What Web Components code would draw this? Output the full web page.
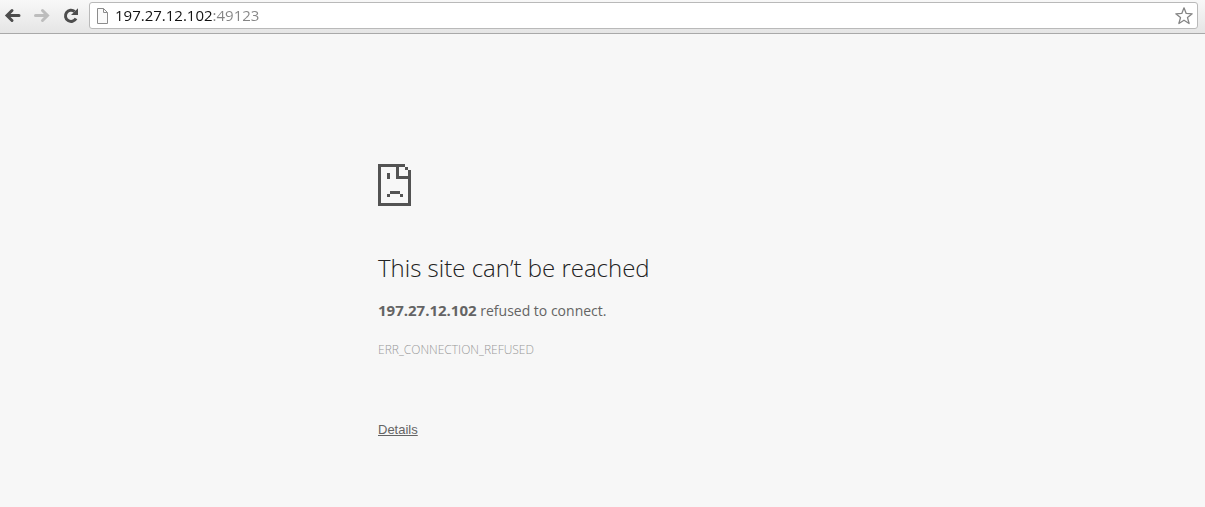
<!DOCTYPE html>
<html lang="en">
<head>
<meta charset="utf-8">
<title>197.27.12.102</title>
<style>
body { margin: 0; background: #f7f7f7; font-family: "Open Sans", "Noto Sans", sans-serif; }
</style>
</head>
<body>
<browser-window>
  <browser-toolbar slot="toolbar" address="197.27.12.102:49123"></browser-toolbar>
  <error-page>
    <span slot="title">This site can’t be reached</span>
    <strong slot="host">197.27.12.102</strong>
    <span slot="reason">refused to connect.</span>
    <span slot="code">ERR_CONNECTION_REFUSED</span>
  </error-page>
</browser-window>
<script>
class BrowserWindow extends HTMLElement {
  constructor() {
    super();
    this.attachShadow({ mode: "open" }).innerHTML = `
      <style>
        :host { display: flex; flex-direction: column; min-height: 100vh; }
      </style>
      <slot name="toolbar"></slot>
      <slot></slot>`;
  }
}

class ToolbarButton extends HTMLElement {
  connectedCallback() {
    if (this.shadowRoot) return;
    this.attachShadow({ mode: "open" }).innerHTML = `
      <style>
        :host { display: block; }
        button { display: block; width: 18px; height: 18px; padding: 0; border: 0; background: none; color: #4d4d4d; }
        button:disabled { color: #bdbdbd; }
      </style>
      <button type="button"><slot></slot></button>`;
    const button = this.shadowRoot.querySelector("button");
    button.setAttribute("aria-label", this.getAttribute("label"));
    button.disabled = this.hasAttribute("disabled");
  }
}

class BrowserToolbar extends HTMLElement {
  connectedCallback() {
    if (this.shadowRoot) return;
    this.attachShadow({ mode: "open" }).innerHTML = `
      <style>
        :host {
          display: flex; align-items: center; box-sizing: border-box; height: 34px;
          padding: 0 7px 2px 4px; border-bottom: 1px solid #a9a9a9;
          background: linear-gradient(#f8f8f8, #e5e5e5);
        }
        nav { display: flex; gap: 11px; margin-right: 9px; }
        svg { display: block; }
        .omnibox {
          flex: 1; display: flex; align-items: center; box-sizing: border-box; height: 27px;
          padding: 0 4px 0 6px; border: 1px solid #b9b9b9; border-radius: 3px; background: #fff;
        }
        input {
          flex: 1; min-width: 0; height: 22px; margin-left: 6px; padding: 0 0 2px; border: 0; outline: 0;
          font: 15px/22px "Open Sans", "Noto Sans", sans-serif; color: transparent;
          background: linear-gradient(to right, #111 98px, #858585 98px);
          -webkit-background-clip: text; background-clip: text;
        }
      </style>
      <nav aria-label="History">
        <toolbar-button label="Back">
          <svg width="18" height="18" viewBox="0 0 18 18" fill="none" stroke="currentColor" stroke-width="3" stroke-linecap="round"><path d="M15 8.500H4M8 3.500l-5 5 5 5"/></svg>
        </toolbar-button>
        <toolbar-button label="Forward" disabled>
          <svg width="18" height="18" viewBox="0 0 18 18" fill="none" stroke="currentColor" stroke-width="3" stroke-linecap="round"><path d="M2.500 8.500H13M9.500 3.500l5 5-5 5"/></svg>
        </toolbar-button>
        <toolbar-button label="Reload">
          <svg width="18" height="18" viewBox="0 0 18 18"><path d="M14 11.500A5.600 5.600 0 1 1 12.600 4.500" fill="none" stroke="currentColor" stroke-width="3"/><path d="M16 1.200V8H9z" fill="currentColor"/></svg>
        </toolbar-button>
      </nav>
      <div class="omnibox">
        <svg width="13" height="16" viewBox="0 0 13 16"><path d="M1.500.5h6l4 4v11h-10z" fill="#fafafa" stroke="#8c8c8c"/><path d="M7.500.5v4h4" fill="none" stroke="#8c8c8c"/></svg>
        <input type="text" aria-label="Address" spellcheck="false">
        <toolbar-button label="Bookmark this page">
          <svg width="18" height="18" viewBox="0 0 18 18" fill="none" stroke="#858585" stroke-width="1.300" stroke-linejoin="round"><path d="M9 .8l2.200 5.600 6 .4-4.700 3.800 1.600 5.900L9 13.200l-5.100 3.300 1.600-5.900L.8 6.800l6-.4z"/></svg>
        </toolbar-button>
      </div>`;
    this.shadowRoot.querySelector("input").value = this.getAttribute("address");
  }
}

class ErrorPage extends HTMLElement {
  constructor() {
    super();
    this.attachShadow({ mode: "open" }).innerHTML = `
      <style>
        :host { display: block; }
        main { box-sizing: border-box; width: 100%; max-width: 449px; margin: 0 auto; padding: 130px 0 48px; color: #646464; }
        svg { display: block; }
        h1 { margin: 46px 0 0; font-size: 24px; line-height: 32px; font-weight: 300; color: #222; }
        p { margin: 16px 0 0; font-size: 14px; line-height: 20px; }
        slot[name="host"] { font-size: 15px; }
        .code { margin-top: 19px; font-size: 12px; font-weight: 300; color: #999; }
        a { display: inline-block; margin-top: 62px; font: 13px/16px "Liberation Sans", Arial, sans-serif; color: #646464; text-decoration: underline; }
      </style>
      <main>
        <svg width="33" height="42" viewBox="0 0 33 42" fill="#535353" shape-rendering="crispEdges" aria-hidden="true">
          <path d="M0 0h27v3H21v9h9V6h3v36H0zM3 3v36h27V15H18V3zM27 3h3v3h-3zM9 9h3v6H9zM12 27h10v3H12zM9 30h3v3H9zM22 30h3v3h-3z" fill-rule="evenodd"/>
        </svg>
        <h1><slot name="title"></slot></h1>
        <p><slot name="host"></slot> <slot name="reason"></slot></p>
        <p class="code"><slot name="code"></slot></p>
        <a href="#details">Details</a>
      </main>`;
  }
}

customElements.define("browser-window", BrowserWindow);
customElements.define("toolbar-button", ToolbarButton);
customElements.define("browser-toolbar", BrowserToolbar);
customElements.define("error-page", ErrorPage);
</script>
</body>
</html>
